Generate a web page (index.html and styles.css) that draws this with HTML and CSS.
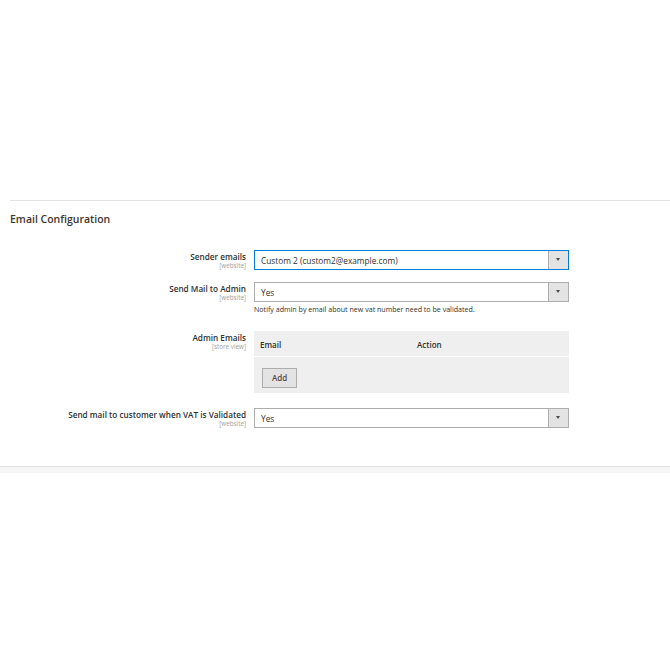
FILE: index.html
```html
<!DOCTYPE html>
<html>
<head>
<meta charset="utf-8">
<link rel="stylesheet" href="styles.css">
</head>
<body>
<div class="page">
  <section class="config">
    <h2 class="title">Email Configuration</h2>
    <div class="rows">
      <div class="row">
        <div class="label"><span class="name">Sender emails</span><span class="scope">[website]</span></div>
        <div class="control">
          <div class="select focus"><span class="value">Custom 2 (custom2@example.com)</span><span class="arrow"></span></div>
        </div>
      </div>
      <div class="row">
        <div class="label"><span class="name">Send Mail to Admin</span><span class="scope">[website]</span></div>
        <div class="control">
          <div class="select"><span class="value">Yes</span><span class="arrow"></span></div>
          <p class="note">Notify admin by email about new vat number need to be validated.</p>
        </div>
      </div>
      <div class="row">
        <div class="label"><span class="name">Admin Emails</span><span class="scope">[store view]</span></div>
        <div class="control">
          <div class="grid">
            <div class="grid-head"><span class="col-email">Email</span><span class="col-action">Action</span></div>
            <div class="grid-foot"><button class="btn">Add</button></div>
          </div>
        </div>
      </div>
      <div class="row">
        <div class="label"><span class="name">Send mail to customer when VAT is Validated</span><span class="scope">[website]</span></div>
        <div class="control">
          <div class="select"><span class="value">Yes</span><span class="arrow"></span></div>
        </div>
      </div>
    </div>
  </section>
  <div class="band"></div>
</div>
</body>
</html>
```
FILE: styles.css
```css
* { box-sizing: border-box; }
html, body { margin: 0; padding: 0; background: #fff; }
body { font-family: "Open Sans", "Liberation Sans", sans-serif; color: #303030; }
.page { padding-top: 200px; }
.config { margin-left: 10px; border-top: 1px solid #e3e3e3; }
.title {
  margin: 0;
  padding-top: 11px;
  font-size: 10.5px;
  line-height: 15px;
  font-weight: 600;
  color: #41362f;
}
.rows { padding-top: 23px; display: flex; flex-direction: column; }
.row { display: flex; margin-bottom: 12px; }
.row:nth-child(2) { margin-bottom: 17px; }
.row:nth-child(3) { margin-bottom: 15px; }
.label {
  width: 236px;
  margin-right: 8px;
  text-align: right;
  display: flex;
  flex-direction: column;
  padding-top: 1px;
}
.name { font-size: 8.2px; line-height: 11px; font-weight: 600; color: #303030; }
.scope { font-size: 6.3px; line-height: 7px; color: #a0a0a0; }
.control { width: 315px; }
.select {
  height: 20px;
  border: 1px solid #adadad;
  display: flex;
  align-items: center;
  background: #fff;
}
.select.focus { border-color: #007bdb; }
.value { flex: 1; padding-left: 6px; font-size: 8.3px; color: #303030; }
.arrow {
  width: 20px;
  height: 100%;
  background: #e3e3e3;
  border-left: 1px solid #adadad;
  position: relative;
}
.arrow::after {
  content: "";
  position: absolute;
  left: 7px;
  top: 7px;
  border-left: 2.5px solid transparent;
  border-right: 2.5px solid transparent;
  border-top: 3px solid #514943;
}
.note { margin: 3px 0 0; font-size: 7.1px; line-height: 9px; color: #303030; }
.grid { background: #efefef; height: 62px; }
.grid-head {
  height: 26px;
  border-bottom: 1px solid #fff;
  display: flex;
  align-items: center;
  padding-top: 2px;
  font-size: 8px;
  font-weight: 600;
  color: #303030;
}
.col-email { width: 163px; padding-left: 6px; }
.grid-foot { padding: 7px 0 0 8px; }
.btn {
  height: 20px;
  width: 35px;
  padding: 0;
  border: 1px solid #adadad;
  background: #e3e3e3;
  font-family: "Open Sans", "Liberation Sans", sans-serif;
  font-size: 8px;
  font-weight: 600;
  color: #514943;
}
.band {
  margin-top: 26px;
  height: 7px;
  background: #f5f5f5;
  border-top: 1px solid #e3e3e3;
}
```
